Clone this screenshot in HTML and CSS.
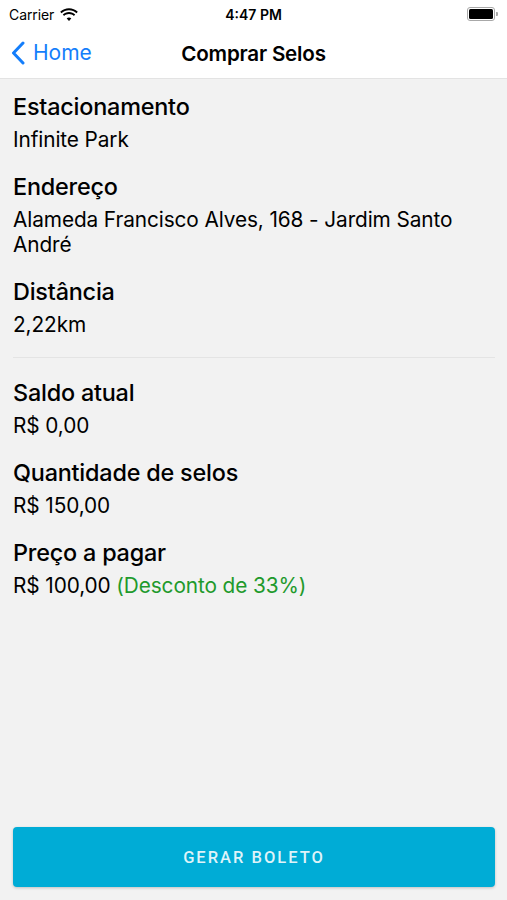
FILE: index.html
```html
<!DOCTYPE html>
<html lang="pt-BR">
<head>
  <meta charset="UTF-8">
  <title>Comprar Selos</title>
  <link rel="stylesheet" href="styles.css">
</head>
<body>
  <div class="screen">
    <div class="status-bar">
      <div class="status-left">
        <span class="carrier">Carrier</span>
        <svg class="wifi" width="18" height="13" viewBox="0 0 18 13">
          <path d="M9 2.2c2.9 0 5.5 1.1 7.5 3l1.3-1.4C15.4 1.5 12.3.2 9 .2S2.6 1.5.2 3.8l1.3 1.4c2-1.9 4.6-3 7.5-3z" fill="#000"/>
          <path d="M9 6c1.9 0 3.6.7 4.9 1.9l1.3-1.4C13.6 5 11.4 4 9 4S4.4 5 2.8 6.5l1.3 1.4C5.4 6.7 7.1 6 9 6z" fill="#000"/>
          <path d="M9 9.6c.9 0 1.7.3 2.3.9L9 12.9 6.7 10.5c.6-.6 1.4-.9 2.3-.9z" fill="#000"/>
        </svg>
      </div>
      <div class="time">4:47 PM</div>
      <div class="status-right">
        <div class="battery"><div class="battery-level"></div></div>
        <div class="battery-nub"></div>
      </div>
    </div>

    <div class="nav-bar">
      <a class="back" href="#">
        <svg width="14" height="24" viewBox="0 0 14 24">
          <path d="M12 2 L2.5 12 L12 22" fill="none" stroke="#147efb" stroke-width="3" stroke-linecap="round" stroke-linejoin="round"/>
        </svg>
        <span>Home</span>
      </a>
      <div class="nav-title">Comprar Selos</div>
    </div>

    <div class="content">
      <div class="section">
        <div class="field">
          <div class="label">Estacionamento</div>
          <div class="value">Infinite Park</div>
        </div>
        <div class="field">
          <div class="label">Endereço</div>
          <div class="value">Alameda Francisco Alves, 168 - Jardim Santo André</div>
        </div>
        <div class="field">
          <div class="label">Distância</div>
          <div class="value">2,22km</div>
        </div>
      </div>

      <hr class="divider">

      <div class="section">
        <div class="field">
          <div class="label">Saldo atual</div>
          <div class="value">R$ 0,00</div>
        </div>
        <div class="field">
          <div class="label">Quantidade de selos</div>
          <div class="value">R$ 150,00</div>
        </div>
        <div class="field">
          <div class="label">Preço a pagar</div>
          <div class="value">R$ 100,00 <span class="discount">(Desconto de 33%)</span></div>
        </div>
      </div>
    </div>

    <div class="footer">
      <button class="btn-primary">Gerar boleto</button>
    </div>
  </div>
</body>
</html>
```

FILE: styles.css
```css
body {
  margin: 0;
  font-family: Inter, "Noto Sans", sans-serif;
  background: #f2f2f2;
  color: #000;
}

.screen {
  display: flex;
  flex-direction: column;
  height: 900px;
}

/* status bar + nav */
.status-bar {
  height: 28px;
  background: #fff;
  display: flex;
  align-items: center;
  justify-content: space-between;
  padding: 0 9px;
  font-size: 14px;
}

.status-left {
  display: flex;
  align-items: center;
  gap: 6px;
  width: 100px;
}

.carrier {
  letter-spacing: -0.1px;
}

.time {
  font-weight: 600;
}

.status-right {
  width: 100px;
  display: flex;
  justify-content: flex-end;
  align-items: center;
}

.battery {
  width: 24px;
  height: 10px;
  border: 1.5px solid #a8a8a8;
  border-radius: 3px;
  padding: 1px;
  box-sizing: content-box;
}

.battery-level {
  height: 100%;
  background: #000;
  border-radius: 1.5px;
}

.battery-nub {
  width: 2px;
  height: 4px;
  background: #a8a8a8;
  border-radius: 0 1px 1px 0;
  margin-left: 1px;
}

.nav-bar {
  position: relative;
  height: 50px;
  background: #fff;
  border-bottom: 1px solid #e3e3e3;
  display: flex;
  align-items: center;
  justify-content: center;
}

.back {
  position: absolute;
  left: 11px;
  top: 12px;
  display: flex;
  align-items: center;
  gap: 8px;
  color: #147efb;
  text-decoration: none;
  font-size: 21px;
}

.nav-title {
  font-size: 20.6px;
  font-weight: 600;
  letter-spacing: -0.2px;
}

/* content */
.content {
  flex: 1;
  padding: 13px 12px 0 13px;
}

.field + .field {
  margin-top: 20px;
}

.label {
  font-size: 23.4px;
  line-height: 29px;
  font-weight: 500;
  letter-spacing: -0.2px;
  margin-bottom: 6px;
}

.value {
  font-size: 20.8px;
  line-height: 25px;
  letter-spacing: -0.1px;
}

.discount {
  color: #1f9a2c;
}

.divider {
  border: none;
  border-top: 1px solid #e4e4e4;
  margin: 20px 0;
}

/* footer */
.footer {
  padding: 0 12px 13px 13px;
}

.btn-primary {
  width: 100%;
  height: 60px;
  border: none;
  border-radius: 4px;
  background: #00acd6;
  color: #dff3f9;
  font-family: Roboto, sans-serif;
  font-weight: 500;
  font-size: 16.5px;
  letter-spacing: 2px;
  text-transform: uppercase;
  box-shadow: 0 1px 3px rgba(0, 0, 0, 0.2);
}
```
